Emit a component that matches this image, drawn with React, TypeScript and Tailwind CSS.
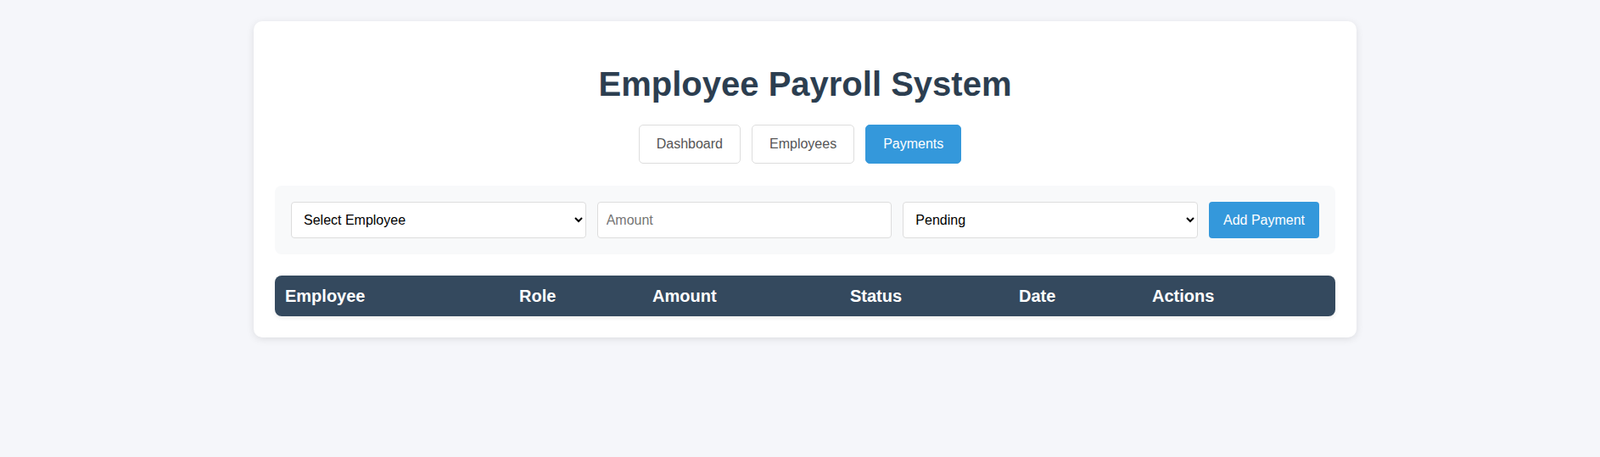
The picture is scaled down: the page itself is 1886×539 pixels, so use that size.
import React from "react";

export default function App() {
  const cols = ["Employee", "Role", "Amount", "Status", "Date", "Actions"];
  return (
    <div
      className="min-h-screen bg-[#f5f6fa] flex justify-center pl-[12px] pt-[25px]"
      style={{ fontFamily: '"Liberation Sans", Arial, sans-serif' }}
    >
      <div className="w-[1300px] h-fit bg-white rounded-[10px] shadow-[0_2px_10px_rgba(0,0,0,0.1)] p-[25px]">
        <h1 className="mt-[26px] text-center text-[40px] leading-[46px] font-bold text-[#2c3e50]">
          Employee Payroll System
        </h1>
        <div className="mt-[25px] flex justify-center gap-[13px] pr-[12px]">
          <button className="h-[46px] px-[20px] border border-[#ddd] rounded-[5px] bg-white text-[16px] text-[#555]">
            Dashboard
          </button>
          <button className="h-[46px] px-[20px] border border-[#ddd] rounded-[5px] bg-white text-[16px] text-[#555]">
            Employees
          </button>
          <button className="h-[46px] px-[20px] border border-[#3498db] rounded-[5px] bg-[#3498db] text-[16px] text-white">
            Payments
          </button>
        </div>
        <div className="mt-[26px] bg-[#f8f9fa] rounded-[8px] p-[19px] flex gap-[13px]">
          <select
            className="flex-1 min-w-0 h-[43px] px-[10px] border border-[#ddd] rounded-[4px] bg-white text-[16px] text-black"
            style={{ fontFamily: '"Liberation Sans", Arial, sans-serif' }}
            defaultValue=""
          >
            <option value="">Select Employee</option>
          </select>
          <input
            className="flex-1 min-w-0 h-[43px] px-[10px] border border-[#ddd] rounded-[4px] bg-white text-[16px] text-black placeholder:text-[#757575]"
            placeholder="Amount"
          />
          <select
            className="flex-1 min-w-0 h-[43px] px-[10px] border border-[#ddd] rounded-[4px] bg-white text-[16px] text-black"
            style={{ fontFamily: '"Liberation Sans", Arial, sans-serif' }}
            defaultValue="Pending"
          >
            <option>Pending</option>
            <option>Paid</option>
          </select>
          <button className="w-[130px] h-[43px] rounded-[4px] bg-[#3498db] text-white text-[16px]">
            Add Payment
          </button>
        </div>
        <div className="mt-[25px] rounded-[8px] overflow-hidden shadow-[0_2px_5px_rgba(0,0,0,0.08)]">
          <div className="grid grid-cols-[276px_157px_233px_199px_157px_228px] h-[48px] items-center bg-[#34495e] text-white text-[20px] font-bold">
            {cols.map((c) => (
              <div key={c} className="px-[12px]">
                {c}
              </div>
            ))}
          </div>
        </div>
      </div>
    </div>
  );
}
